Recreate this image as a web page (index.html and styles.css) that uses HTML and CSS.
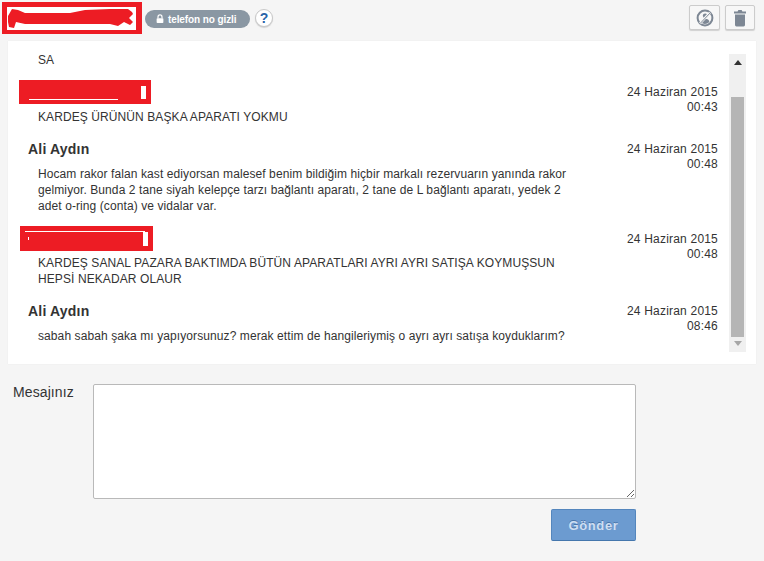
FILE: index.html
```html
<!DOCTYPE html>
<html lang="tr">
<head>
<meta charset="utf-8">
<title>Mesajlar</title>
<link rel="stylesheet" href="styles.css">
</head>
<body>
<div class="page">
  <header class="topbar">
    <div class="topbar-left">
      <svg class="redact-main" viewBox="0 0 140 32" width="140" height="32"><rect width="140" height="32" fill="#ed1c24"/><rect x="5" y="5" width="129" height="23" fill="#fff"/><path d="M6 14 10 7 16 8 23 11 68 11 83 8 108 7 126 7 130 10 131 12 127 16 131 20 128 23 122 20 116 24 108 22 98 22 23 22 14 20 12 26 7 25 6 20z" fill="#ed1c24"/></svg>
      <span class="badge">
        <svg class="lock" viewBox="0 0 10 12" width="8" height="10"><path d="M2.500 5V3.400a2.500 2.500 0 0 1 5 0V5" fill="none" stroke="#fff" stroke-width="1.500"/><rect x="0.800" y="5" width="8.400" height="6" rx="1" fill="#fff"/></svg>
        telefon no gizli
      </span>
      <span class="help">?</span>
    </div>
    <div class="tools">
      <button class="tool" type="button">
        <svg viewBox="0 0 18 18" width="18" height="18"><circle cx="9" cy="9" r="7.400" fill="none" stroke="#7d8794" stroke-width="2"/><circle cx="9.200" cy="6.800" r="2.400" fill="#7d8794"/><path d="M4.800 13.400c.4-2.600 2-3.600 4.400-3.600s3.900 1 4.200 3.200a7 7 0 0 1-8.600.4z" fill="#7d8794"/><path d="M14 3.600 4 14.400" stroke="#f7f7f7" stroke-width="2.500"/><path d="M14.300 3.800 4 14.600" stroke="#7d8794" stroke-width="1"/></svg>
      </button>
      <button class="tool" type="button">
        <svg viewBox="0 0 14 18" width="14" height="18"><path d="M1 2.600h3.600L5.400 1h3.200l.8 1.600H13v1.800H1z" fill="#7d8794"/><path d="M2 5.400h10V16a1.400 1.400 0 0 1-1.400 1.400H3.400A1.400 1.400 0 0 1 2 16z" fill="#7d8794"/></svg>
      </button>
    </div>
  </header>

  <section class="panel">
    <div class="thread">
      <article class="msg msg-first">
        <p class="text">SA</p>
      </article>
      <article class="msg">
        <div class="body">
          <div class="who who-red">
            <svg class="redact redact-a" viewBox="0 0 132 24" width="132" height="24"><rect width="132" height="24" fill="#ed1c24"/><rect x="10" y="19" width="89" height="1" fill="#fff"/><rect x="122" y="6" width="5" height="13" fill="#fff"/></svg>
          </div>
          <p class="text">KARDEŞ ÜRÜNÜN BAŞKA APARATI YOKMU</p>
        </div>
        <time class="date">24 Haziran 2015<br>00:43</time>
      </article>
      <article class="msg">
        <div class="body">
          <div class="who"><span class="name">Ali Aydın</span></div>
          <p class="text">Hocam rakor falan kast ediyorsan malesef benim bildiğim hiçbir markalı rezervuarın yanında rakor gelmiyor. Bunda 2 tane siyah kelepçe tarzı bağlantı aparatı, 2 tane de L bağlantı aparatı, yedek 2 adet o-ring (conta) ve vidalar var.</p>
        </div>
        <time class="date">24 Haziran 2015<br>00:48</time>
      </article>
      <article class="msg msg-tight">
        <div class="body">
          <div class="who who-red who-short">
            <svg class="redact redact-b" viewBox="0 0 133 25" width="133" height="25"><rect width="133" height="25" fill="#ed1c24"/><rect x="5" y="5" width="120" height="1" fill="#fff"/><rect x="123" y="6" width="5" height="14" fill="#fff"/><rect x="8" y="11" width="1" height="3" fill="#fff"/></svg>
          </div>
          <p class="text">KARDEŞ SANAL PAZARA BAKTIMDA BÜTÜN APARATLARI AYRI AYRI SATIŞA KOYMUŞSUN HEPSİ NEKADAR OLAUR</p>
        </div>
        <time class="date">24 Haziran 2015<br>00:48</time>
      </article>
      <article class="msg">
        <div class="body">
          <div class="who"><span class="name">Ali Aydın</span></div>
          <p class="text">sabah sabah şaka mı yapıyorsunuz? merak ettim de hangileriymiş o ayrı ayrı satışa koyduklarım?</p>
        </div>
        <time class="date">24 Haziran 2015<br>08:46</time>
      </article>
    </div>
    <div class="scrollbar">
      <span class="arrow arrow-up"></span>
      <div class="scroll-track"><div class="thumb"></div></div>
      <span class="arrow arrow-down"></span>
    </div>
  </section>

  <form class="reply">
    <label class="reply-label" for="m">Mesajınız</label>
    <div class="reply-main">
      <textarea id="m" class="reply-box"></textarea>
      <button class="send" type="button">Gönder</button>
    </div>
  </form>
</div>
</body>
</html>
```
FILE: styles.css
```css
* { box-sizing: border-box; }
html, body { margin: 0; padding: 0; }
body {
  width: 764px;
  height: 561px;
  overflow: hidden;
  background: #f5f5f5;
  font-family: "Liberation Sans", Arial, sans-serif;
  font-size: 12px;
  color: #333;
}
.topbar {
  height: 41px;
  display: flex;
  justify-content: space-between;
  padding: 2px 9px 0 2px;
}
.topbar-left { display: flex; align-items: flex-start; }
.redact-main { display: block; flex: none; }
.badge {
  margin: 8px 0 0 3px;
  width: 105px;
  height: 18px;
  padding-left: 11px;
  border-radius: 9px;
  background: #8a97a3;
  color: #fff;
  font-size: 10px;
  font-weight: bold;
  line-height: 17px;
  letter-spacing: -.1px;
  display: flex;
  align-items: center;
  gap: 4px;
  white-space: nowrap;
}
.help {
  margin: 7px 0 0 5px;
  width: 18px;
  height: 18px;
  border-radius: 50%;
  background: #fff;
  border: 1px solid #c8c8c8;
  box-shadow: 0 1px 1px rgba(0,0,0,.15);
  color: #2a64a8;
  font-size: 14px;
  font-weight: bold;
  line-height: 16px;
  text-align: center;
}
.tools { display: flex; gap: 5px; padding-top: 3px; align-items: flex-start; }
.tool {
  width: 31px;
  height: 25px;
  padding: 0;
  display: flex;
  align-items: center;
  justify-content: center;
  background: #f7f7f7;
  border: 1px solid #ccc;
  border-radius: 2px;
  box-shadow: 0 1px 1px rgba(0,0,0,.15);
}
.tool + .tool { width: 30px; }
.panel {
  margin: 0 8px;
  width: 748px;
  height: 323px;
  background: #fff;
  display: flex;
  padding: 11px 10px 12px 0;
  box-shadow: 0 0 1px rgba(0,0,0,.08);
}
.thread { flex: 1; padding-right: 11px; }
.msg {
  display: flex;
  justify-content: space-between;
  margin-top: 17px;
}
.msg-first { margin-top: 0; }
.msg-tight { margin-top: 18px; }
.body { width: 560px; }
.who { height: 24px; padding-left: 20px; display: flow-root; }
.who-red { padding-left: 0; }
.who-short { height: 23px; }
.name { display: block; font-size: 14px; font-weight: bold; line-height: 16px; margin-top: -1px; color: #333; letter-spacing: .2px; }
.text { margin: 0; padding-left: 30px; line-height: 16px; color: #333; letter-spacing: .09px; }
.date { text-align: right; line-height: 15px; color: #333; white-space: nowrap; letter-spacing: .2px; }
.redact { display: block; }
.redact-a { margin: -5px 0 0 11px; }
.redact-b { margin: -6px 0 0 12px; }
.scrollbar {
  width: 17px;
  height: 298px;
  margin-top: 2px;
  background: #f0f0f0;
  display: flex;
  flex-direction: column;
  align-items: center;
}
.arrow { width: 0; height: 0; border-left: 4px solid transparent; border-right: 4px solid transparent; }
.arrow-up { margin-top: 6px; border-bottom: 5px solid #333; }
.arrow-down { margin-bottom: 6px; border-top: 5px solid #a6a6a6; }
.scroll-track { flex: 1; width: 100%; padding: 32px 2px 4px; }
.thumb { height: 100%; background: #b5b5b5; }
.reply { display: flex; margin-top: 20px; padding-left: 13px; }
.reply-label { width: 80px; font-size: 14px; line-height: 16px; color: #333; letter-spacing: .1px; }
.reply-main { width: 543px; display: flex; flex-direction: column; align-items: flex-end; }
.reply-box {
  display: block;
  width: 543px;
  height: 115px;
  margin: 0;
  background: #fff;
  border: 1px solid #b9b9b9;
  border-radius: 2px;
}
.send {
  margin-top: 10px;
  width: 85px;
  height: 32px;
  background: #6c9bd0;
  border: 1px solid #5486bd;
  border-bottom-color: #4577ad;
  border-radius: 2px;
  color: #cfdff2;
  text-shadow: 0 -1px 0 rgba(40,80,130,.5);
  font-family: "Liberation Sans", Arial, sans-serif;
  font-size: 13px;
  font-weight: bold;
  letter-spacing: .6px;
}
```
